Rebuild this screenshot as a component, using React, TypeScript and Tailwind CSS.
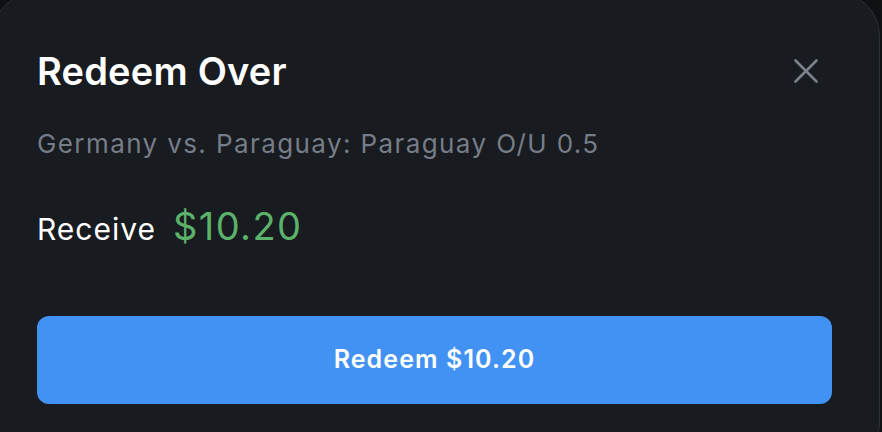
interface RedeemSheetProps {
	readonly side: string;
	readonly market: string;
	readonly payout: string;
}

const CloseIcon = () => (
	<svg
		width="24"
		height="24"
		viewBox="0 0 24 24"
		fill="none"
		stroke="currentColor"
		strokeWidth="2.6"
		strokeLinecap="round"
	>
		<path d="M1.5 1.5l21 21M22.5 1.5l-21 21" />
	</svg>
);

const RedeemSheet: React.FC<RedeemSheetProps> = ({ side, market, payout }) => {
	return (
		<div className="ml-[-8px] mt-[-8px] h-[475px] w-[888px] rounded-[44px] border border-[#2d3138] bg-[#181b20] pl-[44px] pr-[47px] pt-[59px]">
			<div className="flex items-center justify-between">
				<h2 className="text-[38px] leading-[38px] font-semibold tracking-[0.2px] text-white">Redeem {side}</h2>
				<button
					type="button"
					className="mr-[14px] flex h-[24px] w-[24px] items-center justify-center text-[#7b818b]"
				>
					<CloseIcon />
				</button>
			</div>

			<p className="mt-[41px] text-[26px] leading-[26px] tracking-[1.4px] text-[#767d87]">{market}</p>

			<div className="mt-[50px] flex items-baseline gap-[17px]">
				<span className="text-[30px] leading-[38px] tracking-[1px] text-white">Receive</span>
				<span className="text-[38px] leading-[38px] tracking-[1.4px] text-[#5cb26a]">{payout}</span>
			</div>

			<button
				type="button"
				className="mt-[68px] flex h-[88px] w-full items-center justify-center rounded-[12px] bg-[#4292f3] text-[25px] font-semibold tracking-[1.1px] text-white"
			>
				Redeem {payout}
			</button>
		</div>
	);
};

export default function App() {
	return (
		<div
			className="h-[432px] w-[882px] overflow-hidden bg-[#0f1115]"
			style={{ fontFamily: "Inter, 'Noto Sans', sans-serif" }}
		>
			<RedeemSheet
				side="Over"
				market="Germany vs. Paraguay: Paraguay O/U 0.5"
				payout="$10.20"
			/>
		</div>
	);
}
